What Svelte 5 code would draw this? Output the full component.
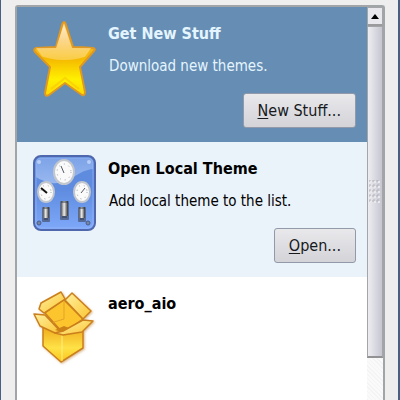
<script>
  let selected = $state(0);
  const items = [
    { title: 'Get New Stuff', text: 'Download new themes.', key: 'N', label: 'ew Stuff...', icon: 'star' },
    { title: 'Open Local Theme', text: 'Add local theme to the list.', key: 'O', label: 'pen...', icon: 'panel' },
    { title: 'aero_aio', icon: 'box' }
  ];
  const grip = [0, 1, 2, 3, 4].flatMap((r) => [0, 1, 2].map((c) => [c * 4, r * 5]));
</script>

<main class="window">
  <div class="frame">
    <ul class="list">
      {#each items as item, i}
        <li class="item" class:selected={selected === i} class:alt={i === 1}>
          {#if item.icon === 'star'}
            <svg class="icon" width="64" height="80" viewBox="0 0 64 80" aria-hidden="true">
              <defs>
                <linearGradient id="gold" x1="0" y1="0" x2="0" y2="1">
                  <stop offset="0" stop-color="#f6b64a" />
                  <stop offset=".5" stop-color="#f5b900" />
                  <stop offset=".78" stop-color="#fff000" />
                  <stop offset="1" stop-color="#ffd800" />
                </linearGradient>
                <linearGradient id="gloss" x1="0" y1="0" x2="0" y2="1">
                  <stop offset="0" stop-color="#fff" stop-opacity=".85" />
                  <stop offset=".55" stop-color="#ffe6bd" stop-opacity=".65" />
                  <stop offset="1" stop-color="#ffe08a" stop-opacity=".5" />
                </linearGradient>
                <clipPath id="starclip"><path d="M32 5L40 29H59L47 47 51 73 32 61 14 73 17 47 4 29H24Z" /></clipPath>
              </defs>
              <path d="M32 3Q33 3 34 6L41 28Q50 28 61 29Q64 30 62 32L48 48 53 73Q53 77 50 76L33 64 17 76Q13 78 13 74L18 48 3 33Q1 30 4 29L24 28 30 6Q31 3 32 3Z" fill="url(#gold)" stroke="#df9822" stroke-width="2" stroke-linejoin="round" />
              <path d="M0 0H64V33Q49 41 32 41T0 33Z" fill="url(#gloss)" clip-path="url(#starclip)" />
              <path d="M19 70L33 59 47 70" fill="none" stroke="#f5bd0d" stroke-width="2" opacity=".5" />
            </svg>
          {:else if item.icon === 'panel'}
            <svg class="icon" width="64" height="80" viewBox="0 1 64 80" aria-hidden="true">
              <defs>
                <linearGradient id="blue" x1="0" y1="0" x2="0" y2="1">
                  <stop offset="0" stop-color="#5d8bdc" />
                  <stop offset=".45" stop-color="#5f8ce0" />
                  <stop offset="1" stop-color="#7fa9fa" />
                </linearGradient>
                <linearGradient id="shine" x1="0" y1="0" x2="0" y2="1">
                  <stop offset="0" stop-color="#a5c2f5" stop-opacity=".45" />
                  <stop offset="1" stop-color="#c0d5fa" stop-opacity=".6" />
                </linearGradient>
                <linearGradient id="steel">
                  <stop offset="0" stop-color="#555" />
                  <stop offset=".45" stop-color="#eee" />
                  <stop offset="1" stop-color="#333" />
                </linearGradient>
              </defs>
              <rect x="2" y="3" width="61" height="74" rx="7" fill="url(#blue)" stroke="#4f68ad" stroke-width="2" />
              <path d="M4 10Q4 5 9 5H56Q61 5 61 10V16C46 17 36 32 20 30Q10 28 4 24Z" fill="url(#shine)" />
              <rect x="4" y="5" width="57" height="70" rx="5" fill="none" stroke="#9ebdf8" stroke-width="1" opacity=".6" />
              <g fill="#b9cff5"><circle cx="7" cy="9" r="2" /><circle cx="57" cy="9" r="2" /></g>
              <g fill="#77859d" stroke="#485d92"><circle cx="7" cy="70" r="2" /><circle cx="56" cy="70" r="2" /></g>
              <g fill="#fafafa" stroke="#c2c6cd" stroke-width="2">
                <ellipse cx="32" cy="19" rx="10" ry="12" />
                <ellipse cx="14" cy="39" rx="8" ry="10" />
                <ellipse cx="50" cy="39" rx="8" ry="10" />
              </g>
              <g fill="none" stroke="#9aa0a8" stroke-dasharray="1 4">
                <ellipse cx="32" cy="19" rx="7" ry="8" />
                <ellipse cx="14" cy="39" rx="5" ry="7" />
                <ellipse cx="50" cy="39" rx="5" ry="7" />
              </g>
              <path d="M29 13L32 20M49 40L53 35" stroke="#535960" stroke-width="1" />
              <path d="M9 35L15 40" stroke="#111" stroke-width="2" />
              <g fill="#566a98"><rect x="10" y="54" width="8" height="15" rx="1" /><rect x="28" y="48" width="9" height="19" rx="1" /><rect x="46" y="54" width="8" height="15" rx="1" /></g>
              <g fill="url(#steel)"><rect x="11" y="54" width="6" height="11" /><rect x="29" y="48" width="7" height="15" /><rect x="47" y="54" width="6" height="11" /></g>
              <path d="M11 55H17M29 49H36M47 55H53M12 66H16M30 64H35M48 66H52" stroke="#333a48" stroke-width="1" />
            </svg>
          {:else}
            <svg class="icon" width="64" height="80" viewBox="0 0 64 80" aria-hidden="true">
              <defs>
                <linearGradient id="flap" x1="0" y1="0" x2="1" y2="1">
                  <stop offset="0" stop-color="#fff0a0" />
                  <stop offset="1" stop-color="#fbc532" />
                </linearGradient>
                <linearGradient id="front" x1="0" y1="0" x2="0" y2="1">
                  <stop offset="0" stop-color="#efaa1c" />
                  <stop offset=".6" stop-color="#ffe247" />
                  <stop offset="1" stop-color="#f9c51c" />
                </linearGradient>
                <filter id="shade" x="-20%" y="-20%" width="140%" height="140%"><feDropShadow dx="1" dy="1" stdDeviation="1" flood-color="#b87828" flood-opacity=".5" /></filter>
              </defs>
              <g stroke="#cb7f1b" stroke-width="1.500" stroke-linejoin="round" filter="url(#shade)">
                <path d="M11 38H51V59L29 73 11 57Z" fill="url(#front)" />
                <path d="M30 46V72" stroke="#ffef82" stroke-width="1" />
                <path d="M13 24L32 11 51 30 31 44Z" fill="#fcc52f" />
                <path d="M32 12V30L19 34" fill="none" stroke="#e3a226" stroke-width="1" />
                <path d="M9 14L29 3 33 10 12 24 7 20Z" fill="url(#flap)" />
                <path d="M33 11L40 4 59 22 51 30Z" fill="url(#flap)" />
                <path d="M2 25L13 26 29 43 23 44 8 37Z" fill="url(#flap)" />
                <path d="M51 31L61 32 50 43 31 46 23 44 31 42Z" fill="url(#flap)" />
                <path d="M23 41L32 37 37 39 30 43Z" fill="#cc8217" stroke="none" />
              </g>
            </svg>
          {/if}
          <div class="body">
            <h2>{item.title}</h2>
            {#if item.text}
              <p>{item.text}</p>
              <button type="button" class="action" onclick={() => (selected = i)}><span class="key">{item.key}</span>{item.label}</button>
            {/if}
          </div>
        </li>
      {/each}
    </ul>
    <div class="scrollbar">
      <button type="button" class="up" aria-label="Scroll up">
        <svg width="8" height="5" viewBox="0 0 8 5" aria-hidden="true"><path d="M4 0L8 5H0Z" fill="#000" /></svg>
      </button>
      <div class="thumb">
        <svg width="12" height="24" viewBox="0 0 12 24" aria-hidden="true">
          {#each grip as [x, y]}
            <path d="M{x} {y + 2}V{y}H{x + 2}" fill="none" stroke="#b4b4ba" />
            <rect x={x + 1} y={y + 1} width="2" height="2" fill="#e9e9ed" />
          {/each}
        </svg>
      </div>
      <div class="trough"></div>
    </div>
  </div>
</main>

<style>
  :global(body) {
    margin: 0;
  }
  .window {
    box-sizing: border-box;
    display: flex;
    height: 100vh;
    padding: 5px 13px 0 14px;
    overflow: hidden;
    background: #eee;
    border: solid #465f82;
    border-width: 0 2px 0 1px;
    font-family: 'DejaVu Sans Condensed', 'DejaVu Sans', sans-serif;
    font-size: 16px;
    font-stretch: condensed;
    line-height: 20px;
  }
  .frame {
    flex: 1;
    display: flex;
    min-width: 0;
    background: #fff;
    border: 2px solid #a2a5a8;
    border-bottom: 0;
    border-radius: 3px 3px 0 0;
  }
  .list {
    flex: 1;
    min-width: 0;
    margin: 0;
    padding: 0;
    list-style: none;
  }
  .item {
    box-sizing: border-box;
    display: flex;
    gap: 12px;
    min-height: 135px;
    padding: 12px 11px 12px 15px;
  }
  .selected {
    background: #668db3;
    color: #e4f5ff;
  }
  .alt {
    background: #eaf2fa;
  }
  .icon {
    flex: none;
  }
  .body {
    flex: 1;
    display: flex;
    flex-direction: column;
    min-width: 0;
  }
  h2 {
    margin: 5px 0 12px;
    font-size: 16px;
    line-height: 20px;
  }
  p {
    margin: 0 0 17px;
    padding-left: 1px;
    font-size: 15px;
  }
  .action {
    align-self: flex-end;
    height: 35px;
    padding: 0 14px;
    font: inherit;
    color: #17191c;
    background: linear-gradient(#e9e9ec, #d3d3d8);
    border: 1px solid #9299a8;
    border-radius: 3px;
  }
  .key {
    text-decoration: underline;
    text-underline-offset: 2px;
  }
  .scrollbar {
    flex: none;
    display: flex;
    flex-direction: column;
    width: 16px;
  }
  .up,
  .thumb {
    box-sizing: border-box;
    display: flex;
    align-items: center;
    justify-content: center;
    border: 1px solid #a4a5a9;
  }
  .up {
    height: 19px;
    padding: 0;
    background: #e9e9ed;
    border-bottom: 2px solid #9b9b9e;
  }
  .thumb {
    flex: 0 0 332px;
    background: linear-gradient(90deg, #ededf1, #c6c6d1);
    border-bottom: 2px solid #929294;
  }
  .trough {
    flex: 1;
    background: repeating-linear-gradient(45deg, #f4f4f4 0 1px, #fafafa 1px 3px);
  }
</style>
